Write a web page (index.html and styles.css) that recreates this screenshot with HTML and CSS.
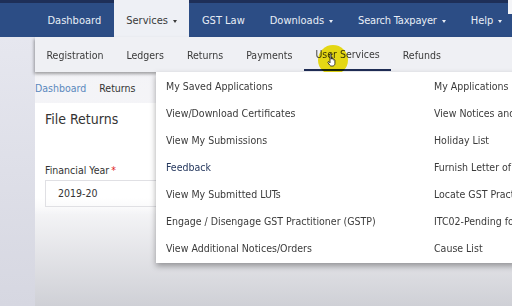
FILE: index.html
```html
<!DOCTYPE html>
<html lang="en">
<head>
  <meta charset="UTF-8" />
  <title>File Returns</title>
  <link rel="stylesheet" href="styles.css">
</head>
<body>
  <div class="topstrip"></div>
  <nav class="mainnav">
    <ul>
      <li>Dashboard</li>
      <li class="active caret">Services</li>
      <li>GST Law</li>
      <li class="caret">Downloads</li>
      <li class="caret">Search Taxpayer</li>
      <li class="caret">Help</li>
    </ul>
  </nav>

  <div class="page">
    <div class="side"></div>
    <div class="main">
      <div class="subnav">
        <ul>
          <li>Registration</li>
          <li>Ledgers</li>
          <li>Returns</li>
          <li>Payments</li>
          <li class="current">User Services
            <span class="spot"></span>
            <svg class="hand" width="10" height="14" viewBox="0 0 10 14">
              <path d="M3 1.2c0-.7 1.2-.7 1.2 0v5l.2-1.2c.2-.6 1.1-.6 1.2 0v1.2c.2-.6 1.1-.6 1.2 0v1c.2-.5 1-.5 1.1.1v3.2c0 1.3-.9 2.5-2.2 2.5H4.4c-.8 0-1.4-.4-1.8-1L1 9.6c-.4-.6.4-1.3 1-.8l1 1z" fill="#fff" stroke="#111" stroke-width=".8" stroke-linejoin="round"/>
            </svg>
          </li>
          <li>Refunds</li>
        </ul>

        <div class="dropdown">
          <a>My Saved Applications</a>
          <a>My Applications</a>
          <a>View/Download Certificates</a>
          <a>View Notices and Orders</a>
          <a>View My Submissions</a>
          <a>Holiday List</a>
          <a class="visited">Feedback</a>
          <a>Furnish Letter of Undertaking</a>
          <a>View My Submitted LUTs</a>
          <a>Locate GST Practitioner</a>
          <a>Engage / Disengage GST Practitioner (GSTP)</a>
          <a>ITC02-Pending for action</a>
          <a>View Additional Notices/Orders</a>
          <a>Cause List</a>
        </div>
      </div>

      <div class="crumbs">
        <a>Dashboard</a>
        <span>Returns</span>
      </div>

      <div class="card">
        <h2>File Returns</h2>
        <label>Financial Year<span class="req">*</span></label>
        <div class="select">2019-20</div>
      </div>
    </div>
  </div>
  <div class="edge"></div>
</body>
</html>
```

FILE: styles.css
```css
* {
  margin: 0;
  padding: 0;
  box-sizing: border-box;
}

body {
  position: relative;
  font-family: "DejaVu Sans Condensed", "DejaVu Sans", sans-serif;
  width: 512px;
  height: 306px;
  overflow: hidden;
  background-color: #d6d7e0;
  color: #333;
}

.topstrip {
  height: 3px;
  background-color: #1e2f58;
}

.edge {
  position: absolute;
  top: 0;
  right: 0;
  width: 4px;
  height: 14px;
  background-color: #f4f5f8;
}

.mainnav {
  height: 34px;
  background-color: #2c4d85;
  padding-left: 35px;
}

.mainnav ul {
  display: flex;
  list-style: none;
  height: 100%;
}

.mainnav li {
  padding: 2px 12.5px 0;
  line-height: 32px;
  font-size: 11px;
  color: #e8edf6;
  white-space: nowrap;
}

.mainnav li:nth-child(5) {
  letter-spacing: -0.2px;
}

.mainnav li.active {
  background-color: #eef0f5;
  color: #3a3a3a;
  margin-top: -3px;
  padding-top: 5px;
}

.caret::after {
  content: "";
  display: inline-block;
  margin-left: 5px;
  vertical-align: middle;
  border-left: 2.5px solid transparent;
  border-right: 2.5px solid transparent;
  border-top: 3px solid currentColor;
}

.page {
  display: flex;
  height: 269px;
}

.side {
  width: 35px;
  background: linear-gradient(#e6e7ef, #d6d7e1);
}

.main {
  flex: 1;
  background: linear-gradient(#f3f3f7 0, #f6f6f8 170px, #cfd0d6 100%);
}

.subnav {
  position: relative;
  height: 35px;
  background-color: #eff0f4;
  box-shadow: -1px 2px 3px rgba(0, 0, 0, 0.35);
  z-index: 2;
}

.subnav ul {
  display: flex;
  list-style: none;
  height: 100%;
}

.subnav li {
  position: relative;
  padding: 2px 11.5px 0;
  line-height: 33px;
  font-size: 10.5px;
  color: #3a3a3a;
  white-space: nowrap;
}

.subnav li.current {
  border-bottom: 2px solid #1f2d55;
  line-height: 31px;
  height: 34px;
}

.spot {
  position: absolute;
  left: 14px;
  top: 8px;
  width: 30px;
  height: 30px;
  border-radius: 50%;
  background-color: #f4e514;
  mix-blend-mode: multiply;
}

.hand {
  position: absolute;
  left: 23px;
  top: 16px;
  z-index: 4;
}

.dropdown {
  position: absolute;
  top: 35px;
  left: 121px;
  width: 360px;
  display: grid;
  grid-template-columns: 268px 1fr;
  padding: 1px 0 1px 10px;
  background-color: #fff;
  box-shadow: 0 3px 6px rgba(0, 0, 0, 0.35);
  z-index: 3;
  overflow: hidden;
}

.dropdown a {
  line-height: 27px;
  font-size: 10.5px;
  color: #3b3b3b;
  white-space: nowrap;
}

.dropdown a.visited {
  color: #26395f;
}

.crumbs {
  padding: 10px 0 0;
  height: 31px;
  font-size: 10.5px;
}

.crumbs a {
  color: #5b88bd;
  margin-right: 10px;
}

.crumbs span {
  color: #333;
}

.card {
  height: 112px;
  padding: 8px 10px;
  background: linear-gradient(#fff 85%, rgba(255, 255, 255, 0));
}

.card h2 {
  font-size: 14px;
  font-weight: normal;
  color: #333;
  margin-bottom: 37px;
}

.card label {
  display: block;
  font-size: 10.5px;
  color: #333;
  margin-bottom: 4px;
}

.req {
  color: #e01b1b;
  margin-left: 2px;
}

.select {
  height: 27px;
  line-height: 25px;
  padding: 0 12px;
  border: 1px solid #e0e0e4;
  font-size: 10.5px;
  color: #333;
}
```
